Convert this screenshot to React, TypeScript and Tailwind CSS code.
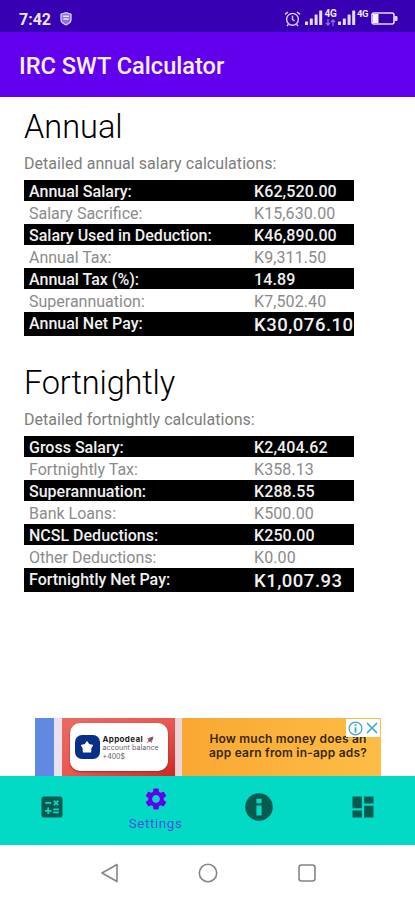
import React from "react";
import { MdCalculate, MdSettings, MdDashboard } from "react-icons/md";

type Row = { label: string; value: string };

const annual: Row[] = [
  { label: "Annual Salary:", value: "K62,520.00" },
  { label: "Salary Sacrifice:", value: "K15,630.00" },
  { label: "Salary Used in Deduction:", value: "K46,890.00" },
  { label: "Annual Tax:", value: "K9,311.50" },
  { label: "Annual Tax (%):", value: "14.89" },
  { label: "Superannuation:", value: "K7,502.40" },
  { label: "Annual Net Pay:", value: "K30,076.10" },
];

const fortnightly: Row[] = [
  { label: "Gross Salary:", value: "K2,404.62" },
  { label: "Fortnightly Tax:", value: "K358.13" },
  { label: "Superannuation:", value: "K288.55" },
  { label: "Bank Loans:", value: "K500.00" },
  { label: "NCSL Deductions:", value: "K250.00" },
  { label: "Other Deductions:", value: "K0.00" },
  { label: "Fortnightly Net Pay:", value: "K1,007.93" },
];

function Table({ rows }: { rows: Row[] }) {
  return (
    <div className="w-[330px]">
      {rows.map((r, i) => {
        const dark = i % 2 === 0;
        const last = i === rows.length - 1;
        const tone = dark
          ? "bg-black text-[#f0f0f0] font-medium leading-[23px]"
          : "bg-white text-[#8b8b8b] leading-[25px]";
        const height = last ? "h-[24px]" : dark ? "h-[21px]" : "h-[23px]";
        return (
          <div
            key={r.label}
            className={`flex items-start overflow-hidden whitespace-nowrap pl-[5px] text-[16px] ${tone} ${height}`}
          >
            <span className="w-[225px] shrink-0">{r.label}</span>
            <span className={last ? "text-[18.5px] leading-[26px] tracking-[0.5px]" : "tracking-[0.1px]"}>
              {r.value}
            </span>
          </div>
        );
      })}
    </div>
  );
}

function Signal() {
  return (
    <svg className="shrink-0" width="18" height="16" viewBox="0 0 18 16" fill="#e4dcff">
      <rect x="0" y="11.5" width="3" height="3.5" rx=".6" />
      <rect x="4.8" y="8.5" width="3" height="6.5" rx=".6" />
      <rect x="9.6" y="4.5" width="3" height="10.5" rx=".6" />
      <rect x="14.2" y="0.5" width="3" height="14.5" rx=".6" />
    </svg>
  );
}

function StatusBar() {
  return (
    <div className="flex h-[32px] items-start bg-[#3700b3] pl-[19px] pt-[10px] text-[#ece6ff]">
      <span className="mt-[1px] w-[41px] text-[16px] font-bold leading-[18px]">7:42</span>
      <svg className="mt-[2px]" width="12" height="14" viewBox="0 0 12 14">
        <path d="M6 .7 11 2.2V7.5C11 10 9 11.8 6 12.8 3 11.8 1 10 1 7.5V2.2Z" fill="#8c72d6" stroke="#d8ccfa" strokeWidth="1.3" />
        <path d="M3 4.2H9M3.4 7H8.6" stroke="#e9e2ff" strokeWidth="1.4" />
      </svg>
      <div className="ml-[212px] flex items-start">
        <svg className="mt-[1px] mr-[4px]" width="17" height="16" viewBox="0 0 17 16" fill="none" stroke="#ddd3ff" strokeWidth="1.4">
          <circle cx="8.5" cy="8.3" r="5.9" />
          <path d="M8.5 4.8V8.5L10.5 10M1 3.4 4 1M16 3.4 13 1M4.5 13.2 3 15M12.5 13.2 14 15" />
        </svg>
        <Signal />
        <div className="flex w-[15px] flex-col items-center">
          <span className="text-[10px] font-bold leading-[8px] tracking-[-0.4px]">4G</span>
          <svg className="mt-[1px]" width="11" height="7" viewBox="0 0 11 7" fill="none" stroke="#8c72d6" strokeWidth="1.3">
            <path d="M3 0V6M1 4 3 6 5 4M8 7V1M6 3 8 1 10 3" />
          </svg>
        </div>
        <Signal />
        <span className="ml-[1px] w-[14px] text-[9.5px] font-bold leading-[8px] tracking-[-0.4px]">4G</span>
        <svg className="mt-[2px]" width="27" height="14" viewBox="0 0 27 14">
          <rect x="1" y="1" width="22" height="11" rx="2" fill="none" stroke="#e4dcff" strokeWidth="1.6" />
          <rect x="2" y="2" width="5.5" height="9" fill="#f5f1ff" />
          <rect x="23.5" y="4" width="3" height="5" rx="1" fill="#e4dcff" />
        </svg>
      </div>
    </div>
  );
}

function Ad() {
  return (
    <div className="relative ml-[35px] flex h-[58px] w-[346px] overflow-hidden bg-[#fbb53f]">
      <div className="w-[19px] bg-[#6189e2]" />
      <div className="w-[8px] bg-[#e9e2ee]" />
      <div className="flex w-[113px] justify-center bg-linear-to-br from-[#e86b63] via-[#ea5850] to-[#cf2620] pt-[5px]">
        <div className="flex h-[48px] w-[98px] items-start rounded-[10px] bg-white pl-[5px] pt-[12px] shadow-[0_1px_2px_#9b2c2c]">
          <div className="flex h-[24px] w-[25px] shrink-0 items-center justify-center rounded-[7px] bg-[#07308a]">
            <svg width="14" height="14" viewBox="0 0 14 14">
              <path d="M7 1.8 8.8 4.6 12.4 5.4 10.8 8 10.6 12H3.4L3.2 8 1.6 5.4 5.2 4.6Z" fill="#fff" stroke="#fff" strokeWidth="1.2" strokeLinejoin="round" />
            </svg>
          </div>
          <div className="ml-[3px] whitespace-nowrap font-['Inter',sans-serif] text-[#66636b]">
            <div className="flex h-[9px] items-center text-[8px] font-bold leading-[9px] tracking-[0.35px] text-[#222]">
              Appodeal
              <svg className="ml-[3px]" width="8" height="8" viewBox="0 0 8 8">
                <path d="M7.5.5 6.5 4 3.5 6 2 4.5 4 1.5Z" fill="#59617b" />
                <path d="M4 1.5 1 2.6 2.5 4ZM6.4 4 5.5 7 4 5.5ZM2 5 .5 7.5 3 6Z" fill="#ee4e2e" />
              </svg>
            </div>
            <div className="text-[7px] leading-[8px] tracking-[0.1px]">account balance</div>
            <div className="text-[7px] leading-[9px]">+400$</div>
          </div>
        </div>
      </div>
      <div className="w-[7px] bg-[#e8d6dc]" />
      <div className="flex flex-1 flex-col items-center bg-linear-to-r from-[#f9a832] to-[#fdbd46] pl-[13px] pt-[14px] font-['Inter',sans-serif] text-[12px] font-semibold leading-[14px] tracking-[0.2px] text-[#38280e]">
        <div className="whitespace-nowrap">How much money does an</div>
        <div className="whitespace-nowrap">app earn from in-app ads?</div>
      </div>
      <div className="absolute right-[1px] top-[1px] flex h-[18px] w-[34px] items-center justify-between bg-white px-[2px]">
        <svg width="15" height="15" viewBox="0 0 15 15" fill="none" stroke="#38a7c9">
          <circle cx="7.5" cy="7.5" r="6.4" strokeWidth="1.2" />
          <path d="M7.5 6.3V11.5M7.5 3.2V5" strokeWidth="1.8" />
        </svg>
        <svg width="12" height="12" viewBox="0 0 12 12" stroke="#38a7c9" strokeWidth="1.6">
          <path d="M1 1 11 11M11 1 1 11" />
        </svg>
      </div>
    </div>
  );
}

export default function App() {
  return (
    <div className="flex h-[900px] w-[415px] flex-col overflow-hidden bg-white font-['Roboto',sans-serif]">
      <StatusBar />
      <header className="flex h-[65px] items-center bg-[#6200ee] pl-[19px] pt-[3px] text-[23.6px] font-medium leading-[26px] text-[#f6f0ff]">
        IRC SWT Calculator
      </header>
      <main className="h-[621px] pl-[24px]">
        <h1 className="mt-[9px] h-[44px] text-[32.5px] font-light leading-[42px] text-black">Annual</h1>
        <p className="h-[30px] whitespace-nowrap text-[16px] leading-[28px] tracking-[0.05px] text-[#7d7d7d]">
          Detailed annual salary calculations:
        </p>
        <Table rows={annual} />
        <h1 className="mt-[26px] h-[44px] text-[32.5px] font-light leading-[42px] tracking-[-0.15px] text-black">Fortnightly</h1>
        <p className="h-[30px] whitespace-nowrap text-[16px] leading-[28px] tracking-[0.05px] text-[#7d7d7d]">
          Detailed fortnightly calculations:
        </p>
        <Table rows={fortnightly} />
      </main>
      <Ad />
      <nav className="grid h-[69px] grid-cols-4 bg-[#03dac5] text-[#065a50]">
        <div className="flex justify-center pt-[17px]"><MdCalculate size={28} /></div>
        <div className="flex flex-col items-center pt-[10px] text-[#6200ee]">
          <MdSettings size={26} />
          <span className="mt-[3px] text-[13.5px] leading-[16px] tracking-[0.55px] text-[#4a55de]">Settings</span>
        </div>
        <div className="flex justify-center pt-[17px]">
          <svg width="28" height="28" viewBox="0 0 28 28">
            <circle cx="14" cy="14" r="13.8" fill="#065a50" />
            <path d="M11.4 5.8H16.6V10.2H11.4ZM11.4 12.4H16.6V22.4H11.4Z" fill="#03dac5" />
          </svg>
        </div>
        <div className="flex justify-center pt-[17px]"><MdDashboard size={28} /></div>
      </nav>
      <div className="flex h-[55px] items-center pl-[100px]">
        <svg width="218" height="22" viewBox="0 0 218 22" fill="none" stroke="#858585" strokeWidth="1.6">
          <path d="M17 2.5V19.5L2 11Z" strokeLinejoin="round" />
          <circle cx="108" cy="11" r="8.7" />
          <rect x="199" y="3" width="16" height="16" rx="2.5" />
        </svg>
      </div>
    </div>
  );
}
